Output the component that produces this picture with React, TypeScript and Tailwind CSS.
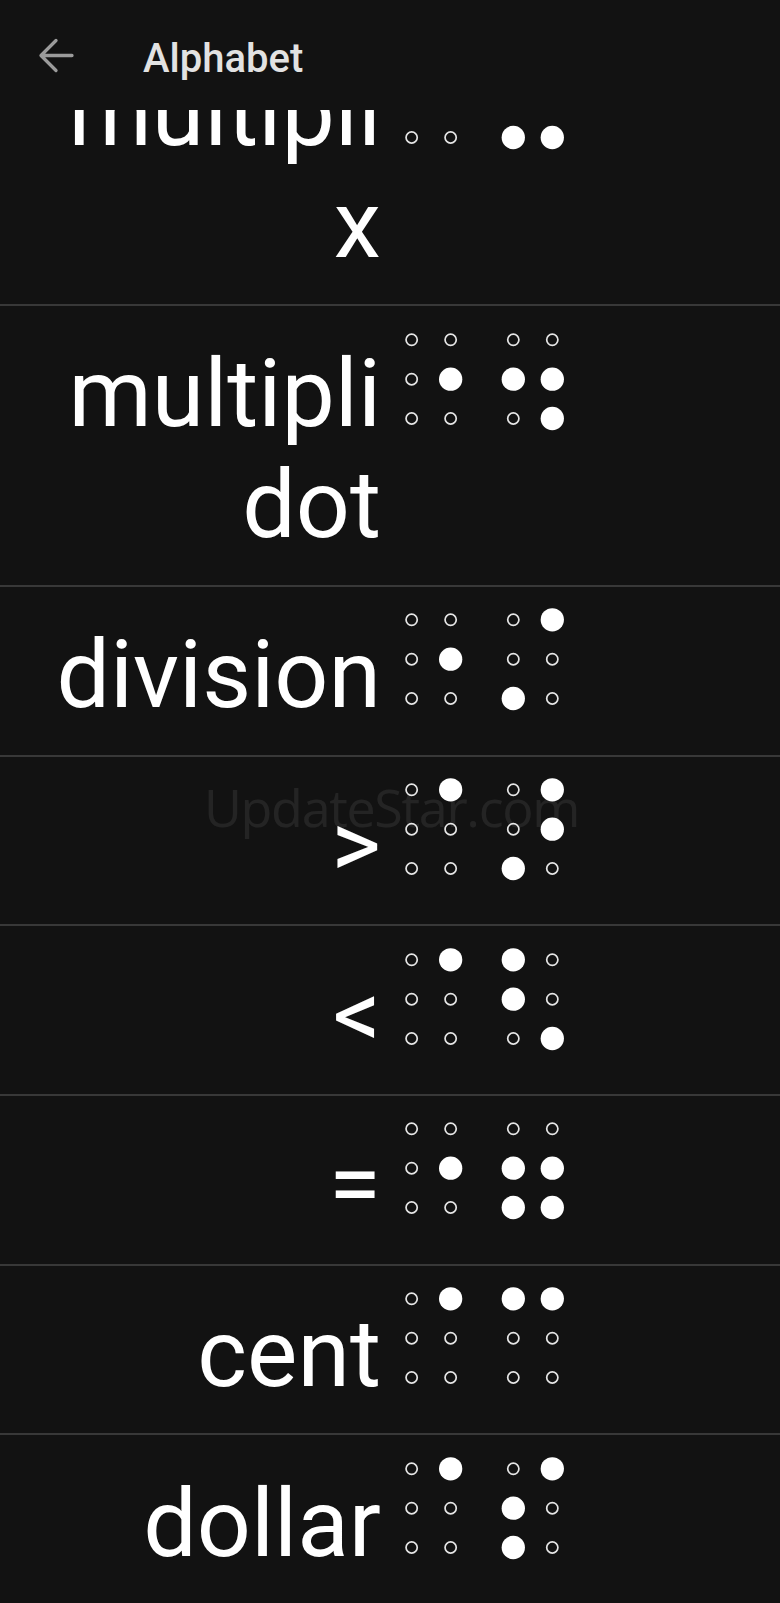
import React from "react";

type Row = { lines: string[]; cells: number[][] };

const rows: Row[] = [
  { lines: ["multipli", "x"], cells: [[5], [2, 3, 6]] },
  { lines: ["multipli", "dot"], cells: [[5], [2, 5, 6]] },
  { lines: ["division"], cells: [[5], [3, 4]] },
  { lines: [">"], cells: [[4], [3, 4, 5]] },
  { lines: ["<"], cells: [[4], [1, 2, 6]] },
  { lines: ["="], cells: [[5], [2, 3, 5, 6]] },
  { lines: ["cent"], cells: [[4], [1, 4]] },
  { lines: ["dollar"], cells: [[4], [2, 3, 4]] },
];

const cellX = [
  [11.65, 50.65],
  [113.3, 152.3],
];
const rowY = [12.8, 52.2, 91.5];

function Braille({ cells }: { cells: number[][] }) {
  const dots: React.ReactNode[] = [];
  cells.forEach((cell, ci) => {
    for (let d = 1; d <= 6; d++) {
      const col = d <= 3 ? 0 : 1;
      const r = (d - 1) % 3;
      const cx = cellX[ci][col];
      const cy = rowY[r];
      const on = cell.includes(d);
      dots.push(
        on ? (
          <circle key={`${ci}-${d}`} cx={cx} cy={cy} r={11.65} fill="#ffffff" />
        ) : (
          <circle
            key={`${ci}-${d}`}
            cx={cx}
            cy={cy}
            r={5.6}
            fill="none"
            stroke="#e6e6e6"
            strokeWidth={1.7}
          />
        )
      );
    }
  });
  return (
    <svg width="164" height="104" viewBox="0 0 164 104" className="ml-[19px] shrink-0">
      {dots}
    </svg>
  );
}

function ListRow({ row }: { row: Row }) {
  return (
    <div className="flex shrink-0 items-start border-b-2 border-[#383838] pt-[20.5px] pb-[24.2px]">
      <div className="w-[381px] shrink-0 pt-[11.7px] text-right text-[95px] leading-[111.3px] text-white">
        {row.lines.map((l, i) => (
          <div key={i} className="whitespace-nowrap">
            {l}
          </div>
        ))}
      </div>
      <Braille cells={row.cells} />
    </div>
  );
}

export default function App() {
  return (
    <div
      className="relative h-[1603px] w-[780px] overflow-hidden bg-[#121212]"
      style={{ fontFamily: "Roboto, 'Noto Sans', sans-serif" }}
    >
      <header className="flex h-[110px] items-center">
        <svg width="48" height="48" viewBox="0 0 48 48" className="ml-[32px] shrink-0">
          <path
            d="M9 24.5H40M24 9.5L9 24.5L24 39.5"
            fill="none"
            stroke="#9b9b9b"
            strokeWidth="3.3"
            strokeLinecap="round"
            strokeLinejoin="round"
          />
        </svg>
        <span className="ml-[63px] pt-[7px] text-[40px] font-medium leading-[47px] text-[#e2e2e2]">
          Alphabet
        </span>
      </header>

      <div className="flex h-[196px] flex-col justify-end overflow-hidden">
        <ListRow row={rows[0]} />
      </div>
      {rows.slice(1).map((r, i) => (
        <ListRow key={i} row={r} />
      ))}

      <div
        className="pointer-events-none absolute left-[204px] top-[768px] text-[52px] tracking-[-1.3px] text-white/[0.08]"
        style={{ fontFamily: "'Open Sans', sans-serif" }}
      >
        UpdateStar.com
      </div>
    </div>
  );
}
